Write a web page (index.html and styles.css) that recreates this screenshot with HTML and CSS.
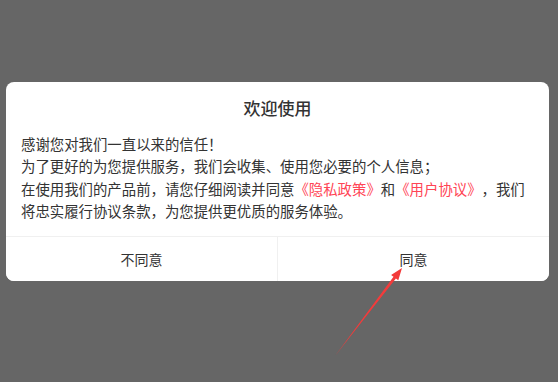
FILE: index.html
```html
<!DOCTYPE html>
<html lang="zh-CN">

<head>
    <meta charset="UTF-8">
    <meta name="viewport" content="width=device-width, initial-scale=1.0">
    <title>欢迎使用</title>
    <link rel="stylesheet" href="styles.css">
</head>

<body>
    <div class="mask">
        <div class="dialog">
            <h3 class="dialog-title">欢迎使用</h3>
            <div class="dialog-content">
                <p>感谢您对我们一直以来的信任！</p>
                <p>为了更好的为您提供服务，我们会收集、使用您必要的个人信息；</p>
                <p>在使用我们的产品前，请您仔细阅读并同意<span class="link">《隐私政策》</span>和<span class="link">《用户协议》</span>，我们将忠实履行协议条款，为您提供更优质的服务体验。</p>
            </div>
            <div class="dialog-btns">
                <button class="btn">不同意</button>
                <button class="btn">同意</button>
            </div>
        </div>
    </div>
    <!-- annotation arrow -->
    <svg class="arrow" width="558" height="382" viewBox="0 0 558 382">
        <polygon points="335,356 395.9,278.5 398.3,280.3 402,268 391.1,274.9 393.5,276.7" fill="#f33b3b" />
    </svg>
</body>

</html>
```

FILE: styles.css
```css
body {
    margin: 0;
    background-color: #666666;
    font-family: "Noto Sans CJK SC", "Noto Sans", sans-serif;
    color: #333333;
}

.mask {
    height: 382px;
    padding: 82px 9px 0 6px;
    box-sizing: border-box;
}

.dialog {
    background-color: #ffffff;
    border-radius: 8px;
    overflow: hidden;
}

.dialog-title {
    margin: 0;
    padding-top: 15px;
    font-size: 17px;
    line-height: 22px;
    font-weight: 500;
    text-align: center;
}

.dialog-content {
    padding: 14px 18px 13px 15px;
    font-size: 14.4px;
    line-height: 22.4px;
    text-spacing-trim: space-all;
}

.dialog-content p {
    margin: 0;
}

.link {
    color: #ff4455;
}

.dialog-btns {
    display: flex;
    border-top: 1px solid #f0f0f0;
}

.btn {
    flex: 1;
    height: 44px;
    border: none;
    background: #ffffff;
    font-family: inherit;
    font-size: 14px;
    color: #333333;
    cursor: pointer;
}

.btn + .btn {
    border-left: 1px solid #f0f0f0;
}

.arrow {
    position: absolute;
    left: 0;
    top: 0;
    pointer-events: none;
}
```
